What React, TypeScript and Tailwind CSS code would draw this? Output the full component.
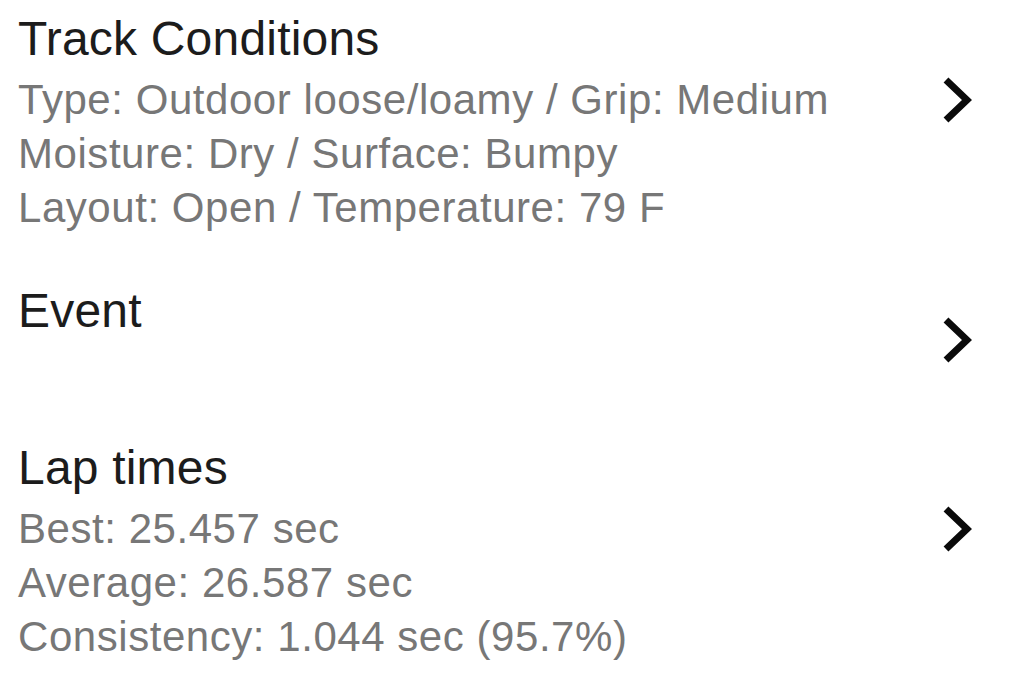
import React from "react";

const Chevron = ({ mt }: { mt: string }) => (
  <svg width="30" height="46" viewBox="0 0 30 46" className={`shrink-0 ${mt}`}>
    <polyline points="4,3 25,23 4,43" fill="none" stroke="#0a0a0a" strokeWidth="7" strokeLinecap="butt" strokeLinejoin="miter" />
  </svg>
);

const Row = ({ title, lines, chevronMt, className }: { title: string; lines: string[]; chevronMt: string; className: string }) => (
  <div className={`flex items-start justify-between pl-[18px] pr-[48px] ${className}`}>
    <div className="flex flex-col">
      <div className="text-[48px] leading-[56px] tracking-[0.2px] text-[#1c1c1c]">{title}</div>
      {lines.length > 0 && (
        <div className="mt-[6px] flex flex-col text-[42px] leading-[54px] tracking-[0.55px] text-[#777777]">
          {lines.map((l) => (
            <div key={l}>{l}</div>
          ))}
        </div>
      )}
    </div>
    <Chevron mt={chevronMt} />
  </div>
);

export default function App() {
  return (
    <div className="w-[1020px] h-[680px] bg-white overflow-hidden pt-[11px]" style={{ fontFamily: '"Liberation Sans", Arial, sans-serif' }}>
      <Row
        title="Track Conditions"
        lines={["Type: Outdoor loose/loamy / Grip: Medium", "Moisture: Dry / Surface: Bumpy", "Layout: Open / Temperature: 79 F"]}
        chevronMt="mt-[66px]"
        className=""
      />
      <Row title="Event" lines={[]} chevronMt="mt-[34px]" className="mt-[48px] h-[56px]" />
      <Row
        title="Lap times"
        lines={["Best: 25.457 sec", "Average: 26.587 sec", "Consistency: 1.044 sec (95.7%)"]}
        chevronMt="mt-[66px]"
        className="mt-[101px]"
      />
    </div>
  );
}
